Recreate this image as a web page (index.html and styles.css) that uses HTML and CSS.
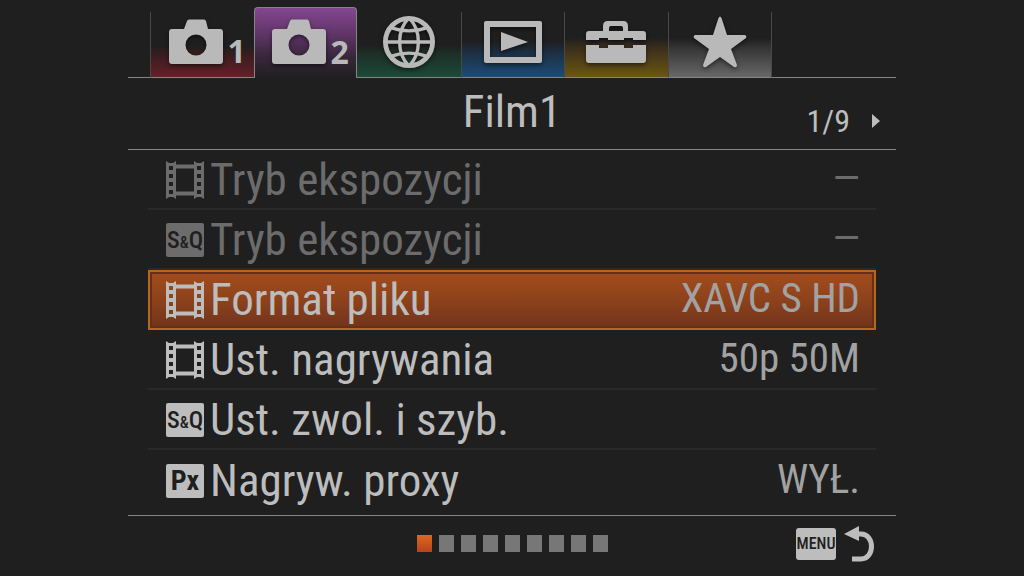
FILE: index.html
```html
<!DOCTYPE html>
<html lang="pl">
<head>
    <meta charset="UTF-8">
    <meta name="viewport" content="width=device-width, initial-scale=1.0">
    <title>Film1</title>
    <link rel="stylesheet" href="styles.css">
</head>
<body>
    <!-- shared icons -->
    <svg class="sprite" width="0" height="0" aria-hidden="true">
        <symbol id="camera" viewBox="0 0 54 45">
            <path fill-rule="evenodd" d="M3 10H15L18 2Q18.500 0.500 20 0.500H35Q36.500 0.500 37 2L39 10H51Q54 10 54 13V42Q54 45 51 45H3Q0 45 0 42V13Q0 10 3 10ZM27 15.500A10.500 10.500 0 1 0 27 36.500A10.500 10.500 0 1 0 27 15.500Z"/>
        </symbol>
        <symbol id="film" viewBox="0 0 38 38">
            <path fill-rule="evenodd" d="M0 0L3 2H7L10 0V3.500H28V0L31 2H35L38 0V38L35 36H31L28 38V34.500H10V38L7 36H3L0 38ZM10 7.500V30.500H28V7.500ZM3 5V9H7V5ZM3 13V17H7V13ZM3 21V25H7V21ZM3 29V33H7V29ZM31 5V9H35V5ZM31 13V17H35V13ZM31 21V25H35V21ZM31 29V33H35V29Z"/>
        </symbol>
    </svg>

    <main class="screen">
        <nav class="tabs">
            <button class="tab camera red" aria-label="Camera 1">
                <svg width="54" height="45"><use href="#camera"/></svg><span>1</span>
            </button>
            <button class="tab camera active" aria-label="Camera 2">
                <svg width="54" height="45"><use href="#camera"/></svg><span>2</span>
            </button>
            <button class="tab green" aria-label="Network">
                <svg class="line" width="52" height="52" viewBox="0 0 54 54">
                    <circle cx="27" cy="27" r="24.500" stroke-width="5"/>
                    <path stroke-width="3.500" d="M27 2C14 15 14 39 27 52M27 2C40 15 40 39 27 52M2 27H52M8 12Q27 19 46 12M8 42Q27 35 46 42"/>
                </svg>
            </button>
            <button class="tab blue" aria-label="Playback">
                <svg width="58" height="44" viewBox="0 0 58 44">
                    <path fill-rule="evenodd" d="M2 1H56Q58 1 58 3V41Q58 43 56 43H2Q0 43 0 41V3Q0 1 2 1ZM6 7V37H52V7Z"/>
                    <path d="M17 12L44 22L17 31Z"/>
                </svg>
            </button>
            <button class="tab yellow" aria-label="Setup">
                <svg width="60" height="44" viewBox="0 0 60 44">
                    <path d="M17 11V6Q17 1 22 1H37Q42 1 42 6V11H37V8Q37 6 35 6H25Q23 6 23 8V11Z"/>
                    <path d="M3 11H57Q60 11 60 14V20H47V18H38V20H22V18H13V20H0V14Q0 11 3 11Z"/>
                    <path d="M0 25H13V28H22V25H38V28H47V25H60V40Q60 43 57 43H3Q0 43 0 40Z"/>
                </svg>
            </button>
            <button class="tab grey" aria-label="My Menu">
                <svg width="54" height="52" viewBox="0 0 54 52">
                    <path d="M25.500 2Q27 -1 28.500 2L34 19L52 19Q54 20 53 22L38 33L44 49Q44 52 41 51L27 41L13 51Q10 52 10 49L16 33L1 22Q0 20 2 19L20 19Z"/>
                </svg>
            </button>
        </nav>

        <header class="title-bar">
            <h1>Film1</h1>
            <div class="pager">
                <span>1/9</span>
                <button aria-label="Next page"><svg width="8" height="14" viewBox="0 0 8 14"><path d="M0 0L8 7L0 14Z"/></svg></button>
            </div>
        </header>

        <div class="menu">
            <button class="item" disabled>
                <svg width="38" height="38"><use href="#film"/></svg>
                <span class="name">Tryb ekspozycji</span>
                <span class="value">—</span>
            </button>
            <button class="item" disabled>
                <span class="badge">S<small>&amp;</small>Q</span>
                <span class="name">Tryb ekspozycji</span>
                <span class="value">—</span>
            </button>
            <button class="item selected">
                <svg width="38" height="38"><use href="#film"/></svg>
                <span class="name">Format pliku</span>
                <span class="value">XAVC S HD</span>
            </button>
            <button class="item">
                <svg width="38" height="38"><use href="#film"/></svg>
                <span class="name">Ust. nagrywania</span>
                <span class="value">50p 50M</span>
            </button>
            <button class="item">
                <span class="badge">S<small>&amp;</small>Q</span>
                <span class="name">Ust. zwol. i szyb.</span>
            </button>
            <button class="item">
                <span class="badge px">Px</span>
                <span class="name">Nagryw. proxy</span>
                <span class="value">WYŁ.</span>
            </button>
        </div>

        <footer class="bottom-bar">
            <div class="pages">
                <i class="current"></i><i></i><i></i><i></i><i></i><i></i><i></i><i></i><i></i>
            </div>
            <button class="back">
                <span class="menu-key">MENU</span>
                <svg width="30" height="36" viewBox="0 0 30 36">
                    <path d="M0 8L15 0V15Z"/>
                    <path class="curve" d="M13 8H17C31 8 31 33 17 33H8"/>
                </svg>
            </button>
        </footer>
    </main>
</body>
</html>
```
FILE: styles.css
```css
* { margin: 0; padding: 0; box-sizing: border-box; }
body {
    min-height: 100vh;
    background: #1f1f1f;
    color: #bdbdbd;
    font-family: "Roboto Condensed", "Liberation Sans Narrow", "Liberation Sans", sans-serif;
}
button {
    background: none;
    border: none;
    color: inherit;
    font: inherit;
    cursor: pointer;
}
svg { fill: currentColor; flex: none; display: block; }
.sprite { position: absolute; }
.screen { width: 75%; margin: 0 auto; padding-top: 7px; }

/* tabs */
.tabs {
    display: grid;
    grid-template-columns: 22px repeat(6, 1fr) 125px;
    height: 71px;
}
.tabs::before, .tabs::after { content: ""; border-bottom: 1px solid #858585; }
.tabs::after { border-left: 1px solid #484848; margin-top: 5px; }
.tab {
    display: flex;
    align-items: center;
    justify-content: center;
    margin-top: 5px;
    padding-bottom: 5px;
    border-left: 1px solid #484848;
    border-bottom: 1px solid #858585;
    color: #b9b9b9;
}
.tab svg { filter: drop-shadow(0 2px 2px rgba(0, 0, 0, 0.5)); }
.camera { padding: 0 0 7px 10px; }
.tab span {
    align-self: flex-end;
    margin: 0 0 3px 5px;
    font: bold 32px/32px "Open Sans", sans-serif;
}
.red { background: linear-gradient(#1f1f1f 52%, #381c1e 65%, #65202a); }
.green { background: linear-gradient(#1f1f1f 52%, #1d3027 65%, #1b4a39); border-left: none; }
.blue { background: linear-gradient(#1f1f1f 45%, #1d2d3d 60%, #1c4c78); }
.yellow { background: linear-gradient(#1f1f1f 40%, #3a2e1c 55%, #6b5611); }
.grey { background: linear-gradient(#1f1f1f 40%, #343434 55%, #686868); }
.tab.active {
    margin-top: 0;
    padding-top: 4px;
    border: 1px solid #858585;
    border-bottom: none;
    border-radius: 4px 4px 0 0;
    background: linear-gradient(#84468f, #62366b 35%, #38263c 70%, #1f1f1f);
}
.line { fill: none; stroke: currentColor; }

.title-bar {
    display: grid;
    grid-template-columns: 1fr auto 1fr;
    height: 72px;
    border-bottom: 1px solid #858585;
}
.title-bar h1 { grid-column: 2; font-size: 45px; line-height: 68px; font-weight: 400; }
.pager {
    display: flex;
    align-items: center;
    justify-content: flex-end;
    gap: 22px;
    padding: 14px 16px 0 0;
    font-size: 32px;
}

/* settings list */
.menu { padding: 0 20px; border-bottom: 1px solid #858585; }
.item {
    display: flex;
    align-items: center;
    width: 100%;
    height: 60px;
    padding: 2px 16px 0 18px;
    border-bottom: 2px solid #292929;
    text-align: left;
    font-size: 45px;
    line-height: 56px;
}
.item:last-child { height: 65px; padding-bottom: 5px; border-bottom: none; }
.name { margin-left: 6px; flex: 1; white-space: nowrap; }
.value { padding-bottom: 4px; color: #a2a2a2; font-size: 41px; line-height: 52px; white-space: nowrap; }
.item:disabled, .item:disabled .value { color: #6c6c6c; }
.selected {
    border: 2px solid #b7671b;
    padding: 0 14px 0 16px;
    background: linear-gradient(#a34c1b, #8d421c 50%, #70341c);
    box-shadow: inset 0 0 0 2px #652f1c;
}
.badge {
    display: flex;
    align-items: center;
    justify-content: center;
    width: 38px;
    height: 34px;
    border-radius: 2px;
    background: currentColor;
    font-size: 24px;
    font-weight: 500;
    line-height: 34px;
    -webkit-text-fill-color: #1f1f1f;
}
.badge small { font-size: 16px; padding-top: 6px; }
.px { font-size: 28px; font-weight: bold; }

.bottom-bar {
    display: grid;
    grid-template-columns: 1fr auto 1fr;
    align-items: center;
    height: 55px;
    padding: 0 22px;
}
.pages { grid-column: 2; display: flex; gap: 7px; }
.pages i { width: 15px; height: 17px; background: #777; }
.pages .current { background: linear-gradient(#dc6820, #b8421d); }
.back { justify-self: end; display: flex; align-items: center; gap: 8px; }
.menu-key {
    width: 40px;
    border-radius: 3px;
    background: #bdbdbd;
    color: #1f1f1f;
    font-size: 16px;
    font-weight: 500;
    line-height: 32px;
    text-align: center;
}
.curve { fill: none; stroke: currentColor; stroke-width: 5; }
```
